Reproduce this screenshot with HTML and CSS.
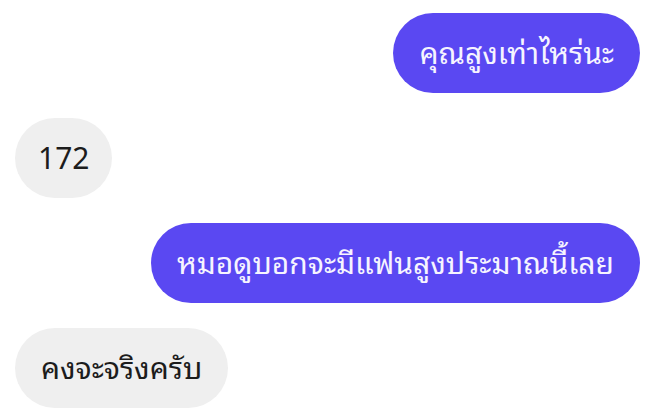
FILE: index.html
```html
<!DOCTYPE html>
<html lang="th">
<head>
<meta charset="utf-8">
<link rel="stylesheet" href="styles.css">
</head>
<body>
<div class="chat">
  <div class="msg out"><span class="bubble">คุณสูงเท่าไหร่นะ</span></div>
  <div class="msg in"><span class="bubble num">172</span></div>
  <div class="msg out"><span class="bubble">หมอดูบอกจะมีแฟนสูงประมาณนี้เลย</span></div>
  <div class="msg in"><span class="bubble">คงจะจริงครับ</span></div>
</div>
</body>
</html>
```
FILE: styles.css
```css
html, body {
  margin: 0;
  padding: 0;
  background: #ffffff;
}
.chat {
  display: flex;
  flex-direction: column;
  gap: 25px;
  padding: 13px 12px 0 15px;
  font-family: "Noto Sans Thai Looped", "Noto Sans", Roboto, sans-serif;
}
.msg {
  display: flex;
}
.msg.out { justify-content: flex-end; }
.msg.in { justify-content: flex-start; }
.bubble {
  display: flex;
  align-items: center;
  height: 80px;
  box-sizing: border-box;
  padding: 0 26px 4px;
  border-radius: 40px;
  font-size: 30px;
  font-weight: 450;
  line-height: 1;
  white-space: nowrap;
}
.bubble.num {
  padding: 0 23px 4px;
}
.out .bubble {
  background: #5a48f2;
  color: #f6f4ff;
}
.in .bubble {
  background: #efefef;
  color: #1c1c1c;
}
```
